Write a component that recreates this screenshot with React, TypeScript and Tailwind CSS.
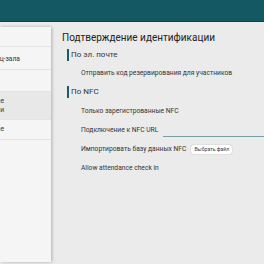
import React from "react";

export default function App() {
  return (
    <div
      className="w-[264px] h-[264px] bg-[#ebebeb] flex flex-col overflow-hidden"
      style={{ fontFamily: "Roboto, 'Noto Sans', sans-serif" }}
    >
      <div className="h-[22px] shrink-0 bg-[#145863] border-b border-[#0d4650]" />
      <div className="flex flex-1 min-h-0">
        <div className="w-[51px] shrink-0 mt-[5px] mb-[2px] bg-[#f5f5f5] shadow-[1px_0_3px_rgba(0,0,0,0.25)] overflow-hidden text-[6.7px] text-[#333] leading-[9px]">
          <div className="h-[20px] border-b border-[#e3e3e3]" />
          <div className="h-[23px] border-b border-[#e3e3e3] flex items-center justify-end pr-[31px] pt-[2px]">
            <span className="whitespace-nowrap shrink-0">Настройки конференц-зала</span>
          </div>
          <div className="h-[22px] border-b border-[#e3e3e3]" />
          <div className="h-[28px] bg-[#e8e8e8] border-b border-[#e3e3e3] flex flex-col justify-center items-end pr-[47px]">
            <span className="whitespace-nowrap shrink-0">Подтверждение</span>
            <span className="whitespace-nowrap shrink-0">идентификации</span>
          </div>
          <div className="h-[20px] border-b border-[#e3e3e3] flex items-center justify-end pr-[47px]">
            <span className="whitespace-nowrap shrink-0">Уведомление</span>
          </div>
        </div>
        <div className="flex-1 pl-[11px] pt-[9px] text-[#333]">
          <div className="h-[14px] text-[10px] leading-[14px] text-[#222] whitespace-nowrap">
            Подтверждение идентификации
          </div>
          <div className="mt-[4px] ml-[5px] h-[12px] flex items-center">
            <div className="w-[2px] h-[12px] bg-[#1b5c66]" />
            <span className="ml-[2px] text-[8px] leading-[12px] whitespace-nowrap">По эл. почте</span>
          </div>
          <div className="mt-[3px] h-[19px] pl-[19px] flex items-center text-[6.7px] whitespace-nowrap">
            Отправить код резервирования для участников
          </div>
          <div className="mt-[3px] ml-[5px] h-[12px] flex items-center">
            <div className="w-[2px] h-[12px] bg-[#1b5c66]" />
            <span className="ml-[2px] text-[8px] leading-[12px] whitespace-nowrap">По NFC</span>
          </div>
          <div className="mt-[4px] flex flex-col text-[6.7px]">
            <div className="h-[19px] pl-[19px] flex items-center whitespace-nowrap">
              Только зарегистрованные NFC
            </div>
            <div className="h-[19px] pl-[19px] flex items-center whitespace-nowrap">
              <span>Подключение к NFC URL</span>
              <div className="ml-[5px] flex-1 h-[8px] mt-[5px] border-b border-[#7a9ea6]" />
            </div>
            <div className="h-[19px] pl-[19px] flex items-center whitespace-nowrap">
              <span>Импортировать базу данных NFC</span>
              <span className="ml-[5px] h-[9px] px-[3px] flex items-center bg-white rounded-[2px] shadow-[0_0_1px_rgba(0,0,0,0.45)] text-[5.2px] text-[#444]">
                Выбрать файл
              </span>
            </div>
            <div className="h-[19px] pl-[19px] flex items-center whitespace-nowrap">
              Allow attendance check in
            </div>
          </div>
        </div>
      </div>
    </div>
  );
}
